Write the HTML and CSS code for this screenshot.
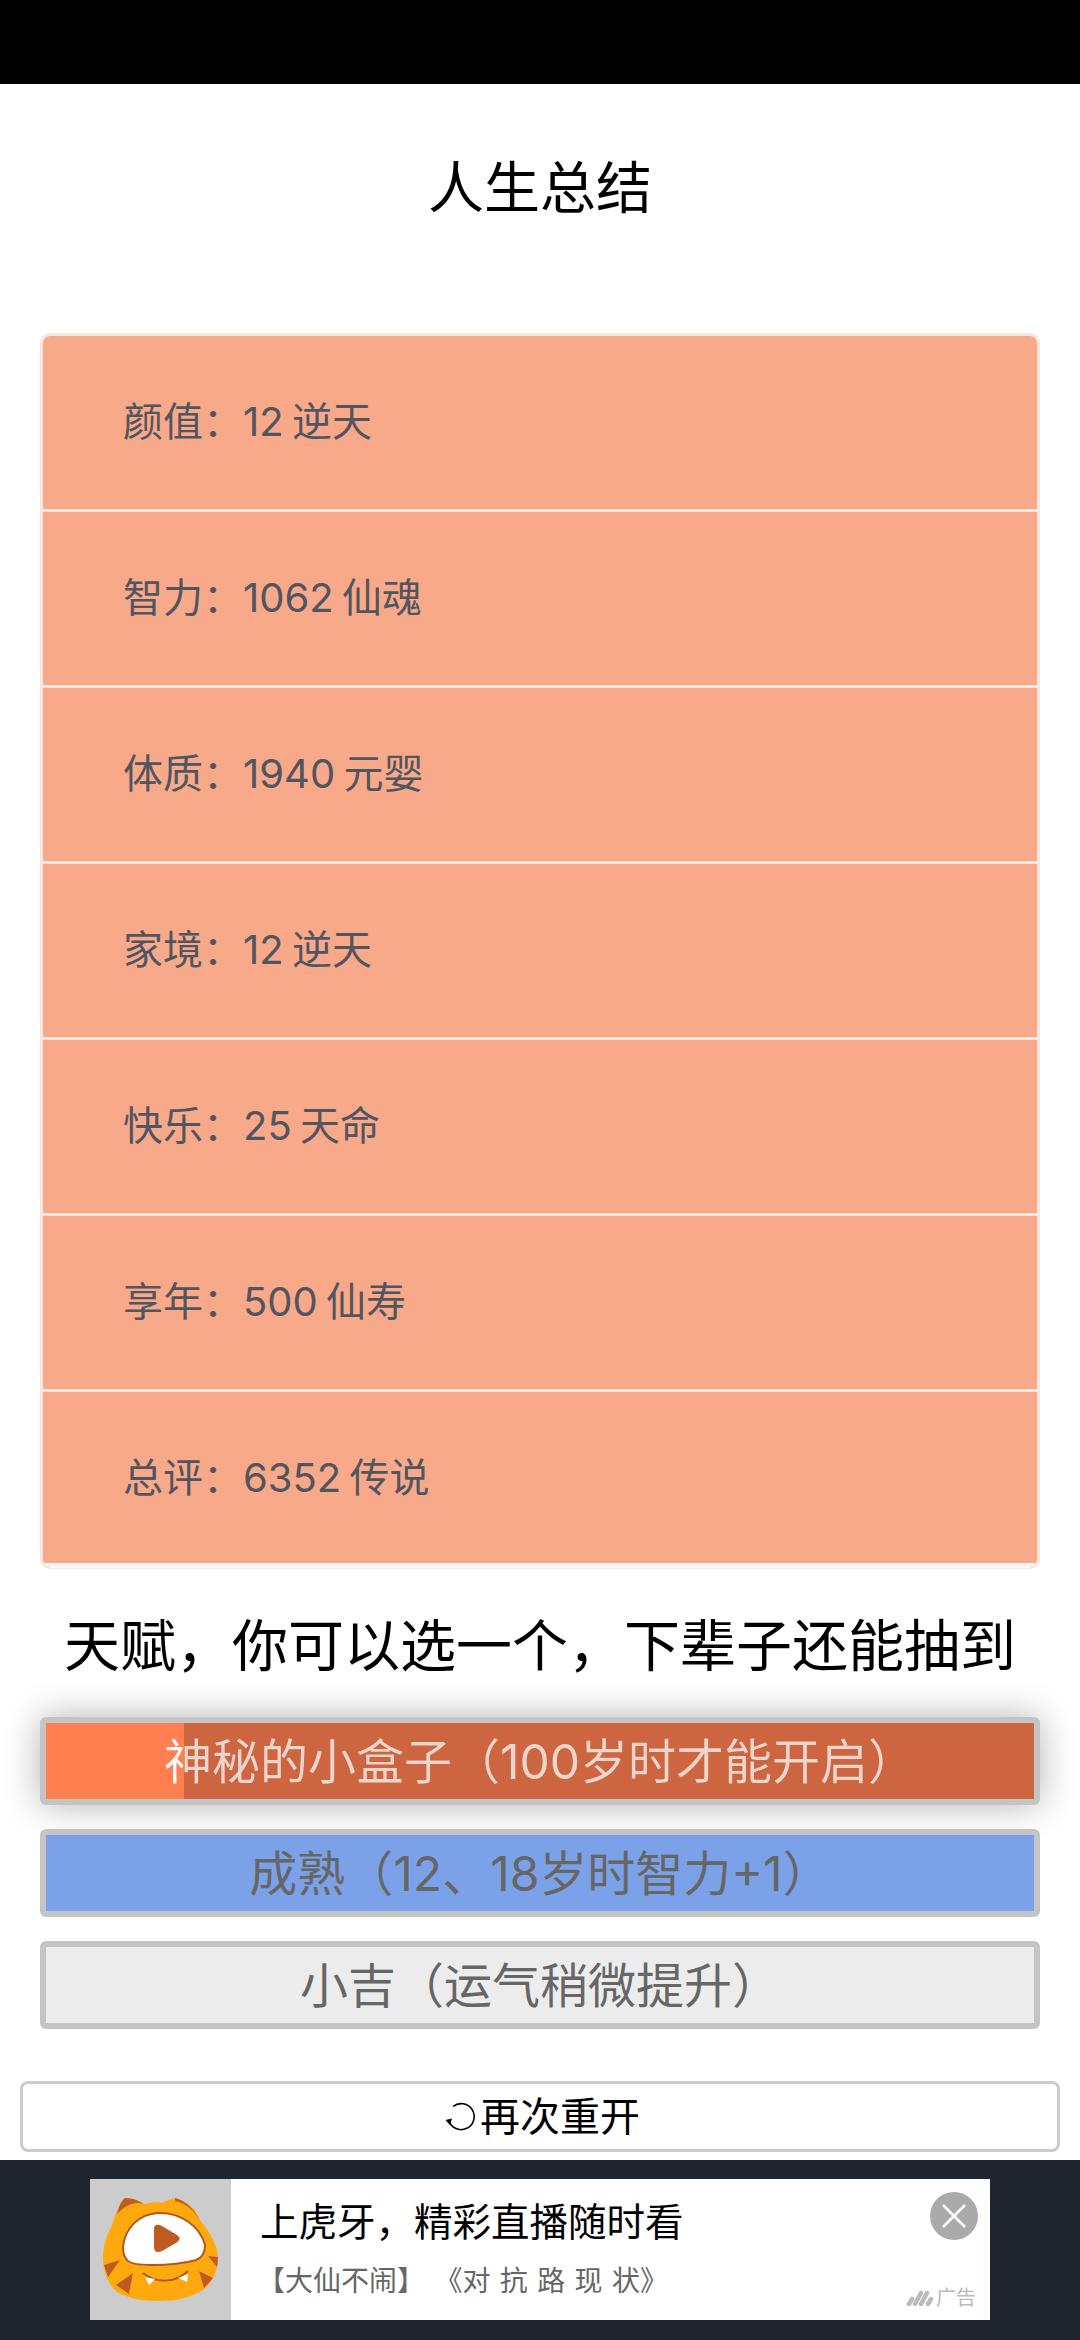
FILE: index.html
```html
<!DOCTYPE html>
<html lang="en">
<head>
    <meta charset="UTF-8">
    <meta name="viewport" content="width=device-width, initial-scale=1.0">
    <title>人生总结</title>
    <link rel="stylesheet" href="styles.css">
</head>
<body>

    <div class="status-bar"></div>

    <h1 class="title">人生总结</h1>

    <ul class="summary">
        <li>颜值：12 逆天</li>
        <li>智力：1062 仙魂</li>
        <li>体质：1940 元婴</li>
        <li>家境：12 逆天</li>
        <li>快乐：25 天命</li>
        <li>享年：500 仙寿</li>
        <li>总评：6352 传说</li>
    </ul>

    <h2 class="talent-title">天赋，你可以选一个，下辈子还能抽到</h2>

    <div class="talents">
        <button class="talent talent-orange">
            <span class="talent-shade"></span>
            <span class="talent-label">神秘的小盒子（100岁时才能开启）</span>
        </button>
        <button class="talent talent-blue">成熟（12、18岁时智力+1）</button>
        <button class="talent talent-grey">小吉（运气稍微提升）</button>
    </div>

    <div class="restart-wrap">
        <button class="restart">
            <svg class="restart-icon" viewBox="0 0 32 32" width="32" height="32">
                <path d="M8 5.5 A13 13 0 1 1 3.6 19" fill="none" stroke="#000" stroke-width="1.6"/>
                <path d="M0.5 19 L7 17.5 L4.8 24 Z" fill="#000"/>
            </svg>再次重开
        </button>
    </div>

    <div class="ad-bar">
        <div class="ad">
            <div class="ad-logo">
                <svg viewBox="0 0 141 141" width="141" height="141">
                    <path d="M35 19 C42 19 48 21 54 25 C63 23 70 23 72 24 C76 22 80 20 85 19 C93 21 100 26 104 30 L110 41 C119 52 128 66 128 79 C128 92 122 104 113 111 C100 119 85 122 70 122 C55 122 39 120 27 113 C18 105 13 92 13 79 C13 66 17 56 22 46 C25 36 29 25 35 19 Z" fill="#ffa90f"/>
                    <path d="M27 35 C29 27 32 21 35 19 C42 19 48 21 54 25 C46 22 36 25 27 35 Z" fill="#bf5a22"/>
                    <path d="M85 19 C93 21 102 27 110 41 C104 32 96 24 85 22 Z" fill="#bf5a22"/>
                    <path d="M33 68 C35 48 50 35 68 34 C90 33 110 47 115 66 C115 74 112 79 106 81 C92 85 75 86 62 86 C50 86 40 85 37 81 C34 78 33 73 33 68 Z" fill="#fff" stroke="#b5561c" stroke-width="2"/>
                    <path d="M64 50 C64 45 68 45 72 47 L87 56 C91 59 90 61 86 64 L72 72 C67 74 64 73 64 68 Z" fill="#bf5a22"/>
                    <path d="M53 94 C65 104 85 105 98 92" fill="none" stroke="#b5561c" stroke-width="2"/>
                    <path d="M55 98 L65 100 L59 106 Z M88 99 L98 95 L97 103 Z" fill="#fff"/>
                    <path d="M14 86 L30 81 L18 98 Z M26 106 L43 94 L39 115 Z M118 77 L128 78 L127 88 Z M109 92 L123 99 L114 109 Z" fill="#bf5a22"/>
                </svg>
            </div>
            <div class="ad-text">
                <div class="ad-headline">上虎牙，精彩直播随时看</div>
                <div class="ad-sub">【大仙不闹】 《对 抗 路 现 状》</div>
            </div>
            <div class="ad-close">
                <svg viewBox="0 0 48 48" width="48" height="48">
                    <path d="M13 13 L35 35 M35 13 L13 35" stroke="#fff" stroke-width="2.5"/>
                </svg>
            </div>
            <div class="ad-mark">
                <svg viewBox="0 0 28 16" width="28" height="16">
                    <path d="M3 14 L6 9 M9 14 L15 3 M15 14 L21 3 M22 14 L25 9" stroke="#bbb" stroke-width="4.5" stroke-linecap="round"/>
                </svg>
                <span>广告</span>
            </div>
        </div>
    </div>

</body>
</html>
```

FILE: styles.css
```css
* {
    box-sizing: border-box;
}

html {
    overflow: hidden;
}

body {
    margin: 0;
    height: 2340px;
    overflow: hidden;
    background-color: white;
    font-family: Inter, "Noto Sans CJK SC", sans-serif;
}

.status-bar {
    height: 84px;
    background-color: black;
}

.title {
    margin: 0;
    padding-top: 67px;
    height: 249px;
    font-size: 56px;
    line-height: 74px;
    font-weight: 400;
    text-align: center;
    color: black;
}

/* Attribute list */
.summary {
    list-style: none;
    margin: 0 40px;
    padding: 0;
    border: 3px solid #fae6de;
    border-bottom: 1px solid #eeeeee;
    border-radius: 10px;
    overflow: hidden;
}

.summary li {
    height: 176px;
    padding-left: 80px;
    font-size: 40px;
    line-height: 171px;
    word-spacing: -3px;
    color: #505560;
    background-color: #f8a98a;
    border-bottom: 3px solid #fae6de;
}

.summary li:last-child {
    border-bottom: 5px solid #fdf5f2;
}

.talent-title {
    margin: 0;
    padding-top: 38px;
    height: 148px;
    font-size: 56px;
    line-height: 78px;
    font-weight: 400;
    text-align: center;
    color: black;
}

/* Talent buttons */
.talents {
    display: flex;
    flex-direction: column;
    gap: 24px;
    margin: 0 40px;
}

.talent {
    position: relative;
    height: 88px;
    padding: 0 0 6px;
    border: 6px solid #c4c4c4;
    border-radius: 6px;
    font-family: inherit;
    font-size: 48px;
    color: #666;
}

.talent-orange {
    background-color: #ff7f50;
    box-shadow: 0 0 36px rgba(0, 0, 0, 0.3);
}

.talent-shade {
    position: absolute;
    top: 0;
    bottom: 0;
    left: 138px;
    right: 0;
    background-color: rgba(0, 0, 0, 0.2);
}

/* Text sits above the shade, dimmed where the shade starts */
.talent-label {
    position: relative;
    background: linear-gradient(90deg, white 19px, #ecd6cc 19px);
    -webkit-background-clip: text;
    background-clip: text;
    color: transparent;
}

.talent-blue {
    background-color: #7ba2e8;
}

.talent-grey {
    background-color: #ececec;
}

/* Restart */
.restart-wrap {
    margin: 52px 20px 0;
    height: 79px;
}

.restart {
    display: flex;
    justify-content: center;
    align-items: center;
    width: 100%;
    height: 71px;
    padding: 0 0 5px 5px;
    background-color: white;
    border: 3px solid #cccccc;
    border-radius: 8px;
    font-family: inherit;
    font-size: 40px;
    color: black;
}

.restart-icon {
    margin: 5px 3px 0 0;
}

/* Ad banner */
.ad-bar {
    height: 180px;
    padding: 19px 90px 20px;
    background-color: #20262f;
}

.ad {
    position: relative;
    display: flex;
    height: 141px;
    background-color: white;
}

.ad-logo {
    width: 141px;
    height: 141px;
    background-color: #cccccc;
}

.ad-text {
    padding: 15px 0 0 29px;
}

.ad-headline {
    font-size: 38.5px;
    line-height: 56px;
    color: black;
}

.ad-sub {
    margin: 10px 0 0 -3px;
    font-size: 28px;
    line-height: 42px;
    word-spacing: 1.5px;
    color: #666;
}

.ad-close {
    position: absolute;
    top: 13px;
    right: 12px;
    width: 48px;
    height: 48px;
    border-radius: 50%;
    background-color: #aaaaaa;
}

.ad-mark {
    position: absolute;
    right: 14px;
    bottom: 7px;
    display: flex;
    align-items: center;
    gap: 2px;
    font-size: 20px;
    line-height: 30px;
    color: #bbb;
}
```
